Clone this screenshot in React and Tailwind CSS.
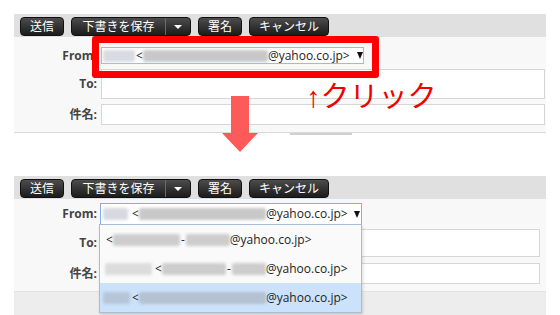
import React from 'react';

const FONT = { fontFamily: '"Open Sans", "Noto Sans CJK JP", sans-serif' };

// Blurred-out part of an address
function Blur({ className = '' }) {
  return <span className={`inline-block h-[12px] rounded-[2px] blur-[1.5px] ${className}`} />;
}

// Small black triangle of the select box
function Caret({ className = '' }) {
  return (
    <span
      className={`inline-block w-0 h-0 border-l-[3px] border-r-[3px] border-t-[7px] border-l-transparent border-r-transparent border-t-[#111] ${className}`}
    />
  );
}

function Toolbar() {
  return (
    <div className="h-[23px] bg-[#e0e0e0] flex items-start pt-[3px] pl-[6px] gap-[7px]">
      <button className="h-[19px] w-[44px] rounded-[4px] border border-[#111] bg-linear-to-b from-[#4d4d4d] to-[#1c1c1c] text-white text-[12px] leading-none flex items-center justify-center">
        送信
      </button>
      <div className="h-[19px] flex rounded-[4px] border border-[#111] bg-linear-to-b from-[#4d4d4d] to-[#1c1c1c] text-white text-[12px] leading-none">
        <span className="w-[93px] flex items-center justify-center">下書きを保存</span>
        <span className="w-[25px] border-l border-[#6a6a6a] flex items-center justify-center">
          <span className="w-0 h-0 border-l-[4px] border-r-[4px] border-t-[4px] border-l-transparent border-r-transparent border-t-white" />
        </span>
      </div>
      <button className="h-[19px] w-[44px] rounded-[4px] border border-[#111] bg-linear-to-b from-[#4d4d4d] to-[#1c1c1c] text-white text-[12px] leading-none flex items-center justify-center">
        署名
      </button>
      <button className="h-[19px] w-[80px] rounded-[4px] border border-[#111] bg-linear-to-b from-[#4d4d4d] to-[#1c1c1c] text-white text-[12px] leading-none flex items-center justify-center">
        キャンセル
      </button>
    </div>
  );
}

function Label({ children }) {
  return <div className="w-[83px] text-right font-bold text-[12px] text-[#444] leading-none">{children}</div>;
}

export default function App() {
  return (
    <div className="w-[560px] h-[315px] overflow-hidden bg-white relative text-[#222]" style={FONT}>
      {/* Before */}
      <div className="mt-[14px] mx-[14px]">
        <Toolbar />
        <div className="bg-[#f8f8f8] border-b border-[#dadada] pt-[10px] pb-[7px] pr-[1px] flex flex-col gap-[5px]">
          <div className="flex items-center gap-[4px]">
            <Label>From:</Label>
            <div className="w-[263px] h-[17px] bg-white border border-[#9cbbe3] flex items-center pl-[1px] text-[12px] leading-none">
              <Blur className="w-[32px] bg-[#d8dbe0]" />
              <span className="ml-[1px]">&lt;</span>
              <Blur className="w-[125px] bg-[#c8c8c8]" />
              <span>@yahoo.co.jp&gt;</span>
              <Caret className="ml-[7px]" />
            </div>
          </div>
          <div className="flex items-center gap-[4px]">
            <Label>To:</Label>
            <div className="flex-1 h-[30px] bg-white border border-[#d6d6d6]" />
          </div>
          <div className="flex items-center gap-[4px]">
            <Label>件名:</Label>
            <div className="flex-1 h-[21px] bg-white border border-[#d6d6d6]" />
          </div>
        </div>
        <div className="flex">
          <div className="ml-[276px] w-[62px] h-[2px] bg-[#cfcfcf]" />
        </div>
      </div>

      {/* After */}
      <div className="mt-[41px] mx-[14px]">
        <Toolbar />
        <div className="bg-[#f8f8f8] border-b border-[#e2e2e2] pt-[4px] pb-[7px] pr-[6px] flex flex-col">
          <div className="flex items-center gap-[3px]">
            <Label>From:</Label>
            <div className="w-[262px] h-[22px] bg-white border border-[#86ade2] flex items-center pl-[2px] text-[12px] leading-none">
              <Blur className="w-[25px] bg-[#d6d9df]" />
              <span className="ml-[4px]">&lt;</span>
              <Blur className="w-[127px] bg-[#c8c8c8]" />
              <span>@yahoo.co.jp&gt;</span>
              <Caret className="ml-[6px]" />
            </div>
          </div>
          <div className="flex items-center gap-[4px] mt-[4px]">
            <Label>To:</Label>
            <div className="flex-1 h-[28px] bg-white border border-[#d6d6d6]" />
          </div>
          <div className="flex items-center gap-[4px] mt-[6px]">
            <Label>件名:</Label>
            <div className="flex-1 h-[21px] bg-white border border-[#d6d6d6]" />
          </div>
        </div>
        <div className="h-[30px] bg-[#ededed]" />
      </div>

      {/* Open dropdown list */}
      <div className="absolute left-[99px] top-[224px] w-[263px] h-[89px] bg-[#fafafa] border border-[#a7bcd8] shadow-[1px_2px_3px_rgba(0,0,0,0.15)] flex flex-col text-[12px] leading-none">
        <div className="h-[29px] flex items-center pl-[6px]">
          <span>&lt;</span>
          <Blur className="w-[67px] bg-[#cdcdcd]" />
          <span className="mx-[1px]">-</span>
          <Blur className="w-[44px] bg-[#cdcdcd]" />
          <span>@yahoo.co.jp&gt;</span>
        </div>
        <div className="h-[29px] flex items-center pl-[5px]">
          <Blur className="w-[47px] bg-[#dcdcdc]" />
          <span className="ml-[3px]">&lt;</span>
          <Blur className="w-[64px] bg-[#cdcdcd]" />
          <span className="mx-[1px]">-</span>
          <Blur className="w-[34px] bg-[#cdcdcd]" />
          <span>@yahoo.co.jp&gt;</span>
        </div>
        <div className="flex-1 flex items-center pl-[3px] bg-[#cce2fa]">
          <Blur className="w-[27px] bg-[#b6c6d8]" />
          <span className="ml-[2px]">&lt;</span>
          <Blur className="w-[127px] bg-[#b4c1d0]" />
          <span>@yahoo.co.jp&gt;</span>
        </div>
      </div>

      {/* Annotations */}
      <div className="absolute left-[92px] top-[36px] w-[287px] h-[42px] border-[7px] border-[#ff0000] rounded-[3px]" />
      <svg className="absolute left-[220px] top-[96px]" width="40" height="57" viewBox="0 0 40 57">
        <path d="M11 0 H29 V37 H38 L20 56 L2 37 H11 Z" fill="#ff5a5a" />
      </svg>
      <div
        className="absolute left-[306px] top-[83px] text-[29px] leading-none text-[#f20000]"
        style={{ fontFamily: '"Liberation Sans", "Noto Sans CJK JP", sans-serif' }}
      >
        ↑クリック
      </div>
    </div>
  );
}
